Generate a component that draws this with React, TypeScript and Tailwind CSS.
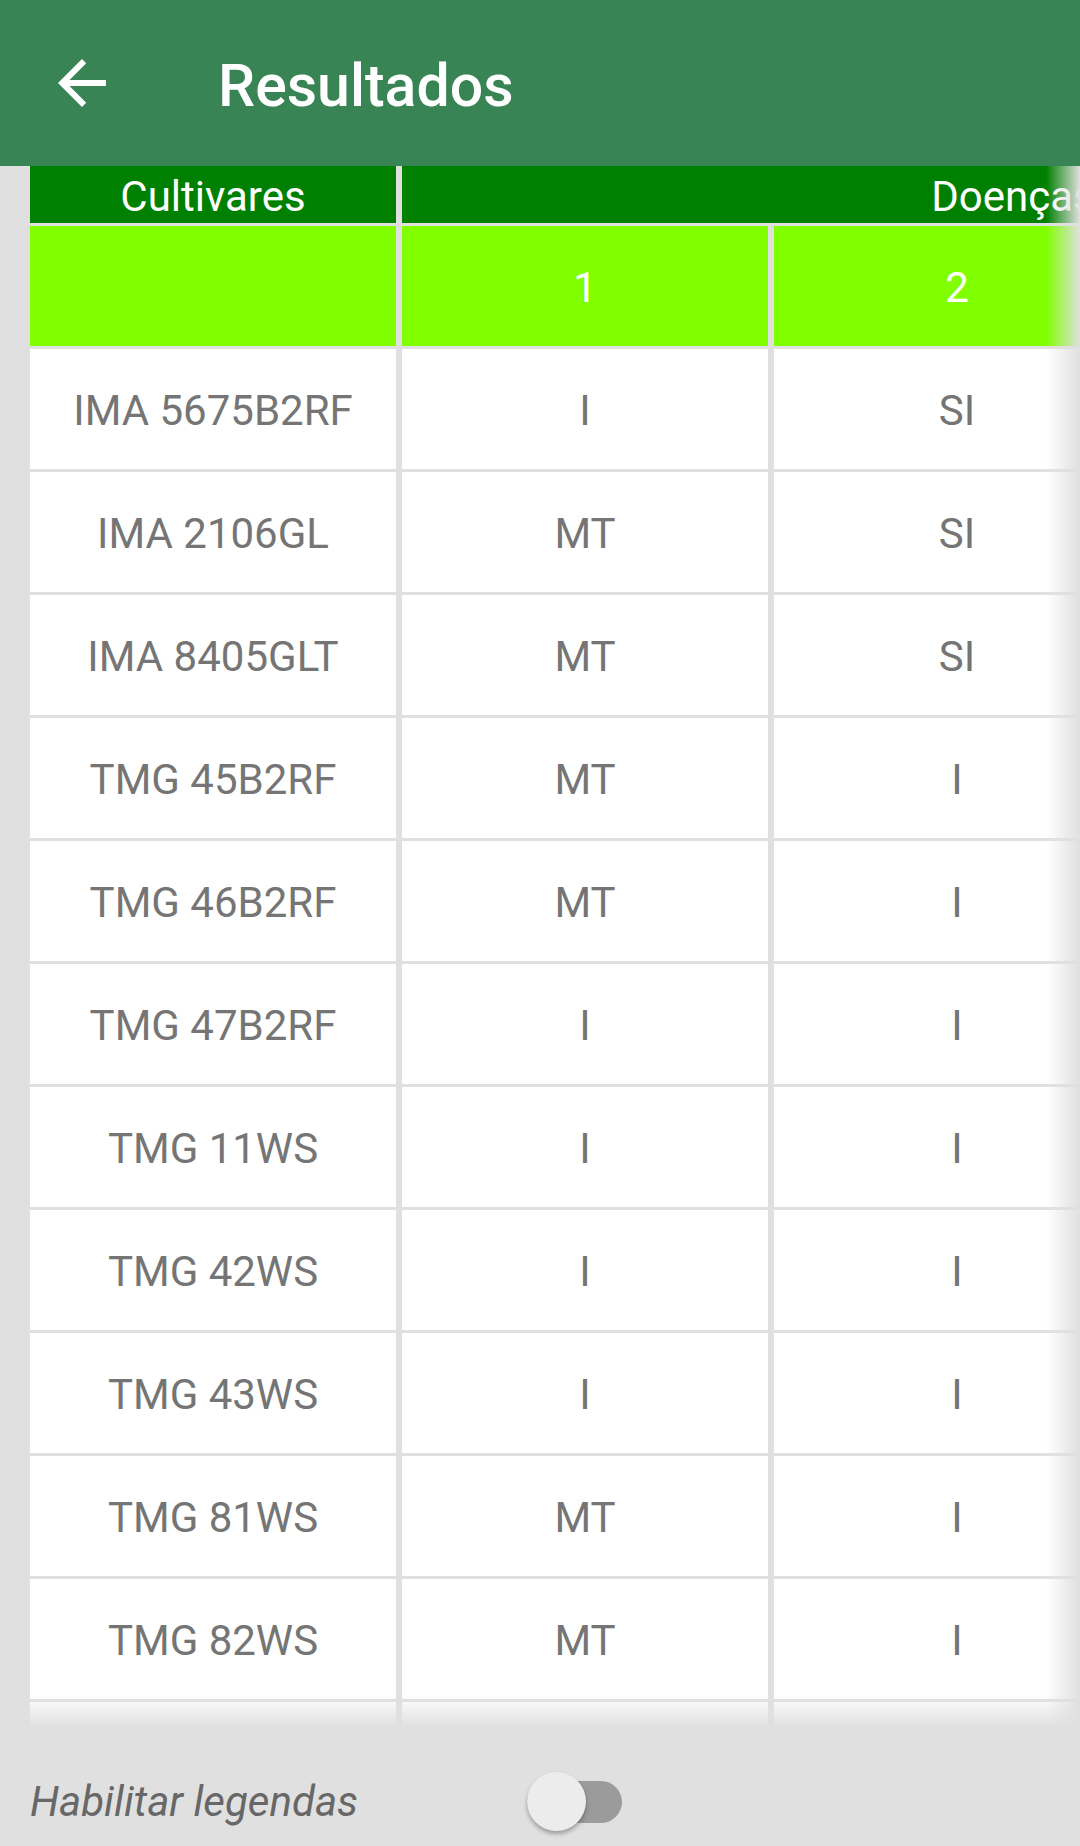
import React from 'react';

type Row = { name: string; a: string; b: string };

const rows: Row[] = [
  { name: 'IMA 5675B2RF', a: 'I', b: 'SI' },
  { name: 'IMA 2106GL', a: 'MT', b: 'SI' },
  { name: 'IMA 8405GLT', a: 'MT', b: 'SI' },
  { name: 'TMG 45B2RF', a: 'MT', b: 'I' },
  { name: 'TMG 46B2RF', a: 'MT', b: 'I' },
  { name: 'TMG 47B2RF', a: 'I', b: 'I' },
  { name: 'TMG 11WS', a: 'I', b: 'I' },
  { name: 'TMG 42WS', a: 'I', b: 'I' },
  { name: 'TMG 43WS', a: 'I', b: 'I' },
  { name: 'TMG 81WS', a: 'MT', b: 'I' },
  { name: 'TMG 82WS', a: 'MT', b: 'I' },
  { name: '', a: '', b: '' },
];

function Cell({ children }: { children?: React.ReactNode }) {
  return (
    <div className="w-[366px] h-[120px] shrink-0 pt-[3px] bg-white flex items-center justify-center text-[42px] leading-none text-[#757575]">
      {children}
    </div>
  );
}

export default function App() {
  return (
    <div className="w-[1080px] h-[1846px] bg-[#e0e0e0] flex flex-col overflow-hidden font-['Roboto',sans-serif]">
      {/* app bar */}
      <header className="h-[166px] shrink-0 bg-[#388455] flex items-center">
        <svg className="ml-[46px] w-[72px] h-[72px]" viewBox="0 0 24 24" fill="#ffffff">
          <path d="M20 11H7.83l5.59-5.59L12 4l-8 8 8 8 1.41-1.41L7.83 13H20v-2z" />
        </svg>
        <h1 className="ml-[100px] pt-[4px] text-[59px] font-medium text-white leading-none">Resultados</h1>
      </header>

      {/* table */}
      <div className="relative h-[1561px] shrink-0 overflow-hidden">
        <div className="pl-[30px] flex flex-col gap-[3px] w-max">
          <div className="flex gap-[6px] h-[57px]">
            <div className="w-[366px] pt-[4px] bg-[#008000] flex items-center justify-center text-[42px] leading-none text-white">
              Cultivares
            </div>
            <div className="w-[1222px] pt-[4px] bg-[#008000] flex items-center justify-center text-[42px] leading-none text-white">
              Doenças
            </div>
          </div>
          <div className="flex gap-[6px] h-[120px]">
            <div className="w-[366px] bg-[#7fff00]" />
            <div className="w-[366px] pt-[3px] bg-[#7fff00] flex items-center justify-center text-[42px] leading-none text-white">1</div>
            <div className="w-[366px] pt-[3px] bg-[#7fff00] flex items-center justify-center text-[42px] leading-none text-white">2</div>
          </div>
          {rows.map((r, i) => (
            <div key={i} className="flex gap-[6px]">
              <Cell>{r.name}</Cell>
              <Cell>{r.a}</Cell>
              <Cell>{r.b}</Cell>
            </div>
          ))}
        </div>
        <div className="absolute top-0 bottom-0 right-0 w-[34px] bg-linear-to-r from-[#e0e0e0]/0 to-[#e0e0e0]" />
        <div className="absolute left-0 right-0 bottom-0 h-[32px] bg-linear-to-b from-[#e0e0e0]/0 to-[#e0e0e0]" />
      </div>

      {/* legend toggle */}
      <div className="mt-[29px] h-[90px] flex items-center pl-[30px]">
        <span className="w-[497px] pt-[2px] text-[42px] leading-none italic text-[#676767]">Habilitar legendas</span>
        <div className="relative w-[95px] h-[59px]">
          <div className="absolute left-0 top-[9px] w-[95px] h-[42px] rounded-full bg-[#9b9b9b]" />
          <div className="absolute left-0 top-0 w-[59px] h-[59px] rounded-full bg-[#ececec] shadow-[0_3px_4px_rgba(0,0,0,0.3)]" />
        </div>
      </div>
    </div>
  );
}
